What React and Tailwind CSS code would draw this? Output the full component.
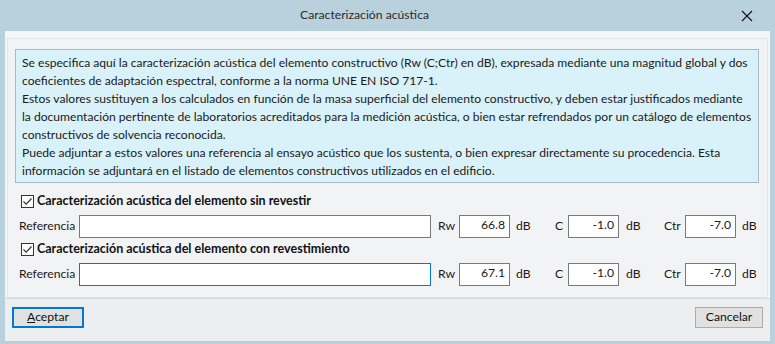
import React from "react";

const font = { fontFamily: "Lato, 'Noto Sans', sans-serif" };

function Check() {
  return (
    <div className="w-[13px] h-[13px] border border-[#333333] bg-white flex items-center justify-center shrink-0">
      <svg width="11" height="11" viewBox="0 0 11 11">
        <path d="M1.5 5.5 L4.2 8.2 L9.5 2.5" fill="none" stroke="#333" strokeWidth="1.2" />
      </svg>
    </div>
  );
}

function Num({ v }) {
  return (
    <div className="w-[51px] h-[23px] border border-[#7a7a7a] bg-white flex items-center justify-end pr-[4px] pb-[2px] shrink-0">
      {v}
    </div>
  );
}

function Row({ rw, c, ctr, focused }) {
  return (
    <div className="flex items-center h-[23px] text-[12.2px] text-[#1a1a1a]">
      <span className="w-[64px] pl-[4px] shrink-0">Referencia</span>
      <div
        className={
          "w-[352px] h-[23px] bg-white shrink-0 border " +
          (focused ? "border-[#0078d7]" : "border-[#7a7a7a]")
        }
      />
      <span className="w-[28px] pl-[7px] shrink-0">Rw</span>
      <Num v={rw} />
      <span className="w-[45px] pl-[6px] shrink-0">dB</span>
      <span className="w-[13px] shrink-0">C</span>
      <Num v={c} />
      <span className="w-[45px] pl-[7px] shrink-0">dB</span>
      <span className="w-[21px] shrink-0">Ctr</span>
      <Num v={ctr} />
      <span className="pl-[6px] shrink-0">dB</span>
    </div>
  );
}

export default function App() {
  const lines = [
    "Se especifica aquí la caracterización acústica del elemento constructivo (Rw (C;Ctr) en dB), expresada mediante una magnitud global y dos",
    "coeficientes de adaptación espectral, conforme a la norma UNE EN ISO 717-1.",
    "Estos valores sustituyen a los calculados en función de la masa superficial del elemento constructivo, y deben estar justificados mediante",
    "la documentación pertinente de laboratorios acreditados para la medición acústica, o bien estar refrendados por un catálogo de elementos",
    "constructivos de solvencia reconocida.",
    "Puede adjuntar a estos valores una referencia al ensayo acústico que los sustenta, o bien expresar directamente su procedencia. Esta",
    "información se adjuntará en el listado de elementos constructivos utilizados en el edificio.",
  ];
  return (
    <div style={font} className="w-[775px] h-[344px] bg-[#b9d1dc] flex flex-col overflow-hidden">
      <div className="h-[31px] flex items-center shrink-0">
        <div className="flex-1 text-center pl-[5px] text-[12.2px] text-[#2b2b2b]">Caracterización acústica</div>
        <div className="w-[46px] mr-[5px] flex items-center justify-center">
          <svg width="12" height="12" viewBox="0 0 12 12">
            <path d="M1 1 L11 11 M11 1 L1 11" stroke="#111" strokeWidth="1.1" />
          </svg>
        </div>
      </div>
      <div className="mx-[5px] h-[310px] bg-[#f4f5f6] flex flex-col">
        <div className="mt-[7px] mx-[2px] border-t border-l border-r border-[#e2e5e8] bg-[#f2f3f5] px-[7px] pt-[10px] pb-[11px] border-b">
          <div className="w-[744px] h-[134px] border border-[#a3bcc6] bg-[#d9f1f9] px-[6px] pt-[4px] text-[12.1px] leading-[18px] text-[#1a1a1a]">
            {lines.map((l, i) => (
              <div key={i} className="whitespace-nowrap">{l}</div>
            ))}
          </div>
          <div className="mt-[8px] h-[20px] flex items-center pl-[6px] gap-[3px]">
            <Check />
            <span className="font-bold text-[12.5px] text-[#111]">Caracterización acústica del elemento sin revestir</span>
          </div>
          <div className="mt-[4px]">
            <Row rw="66.8" c="-1.0" ctr="-7.0" />
          </div>
          <div className="mt-[1px] h-[20px] flex items-center pl-[6px] gap-[3px]">
            <Check />
            <span className="font-bold text-[12.5px] text-[#111]">Caracterización acústica del elemento con revestimiento</span>
          </div>
          <div className="mt-[4px]">
            <Row rw="67.1" c="-1.0" ctr="-7.0" focused />
          </div>
        </div>
        <div className="flex-1 bg-[#eceef0] border-t border-[#d6dadd] flex items-start justify-between px-[7px] pt-[8px]">
          <button className="w-[72px] h-[21px] border-2 border-[#0078d7] bg-[#e1e1e1] text-[12.2px] text-[#111] flex items-center justify-center">
            <span><span className="underline">A</span>ceptar</span>
          </button>
          <button className="w-[68px] h-[21px] border border-[#adadad] bg-[#e1e1e1] text-[12.2px] text-[#111] flex items-center justify-center">
            Cancelar
          </button>
        </div>
      </div>
    </div>
  );
}
